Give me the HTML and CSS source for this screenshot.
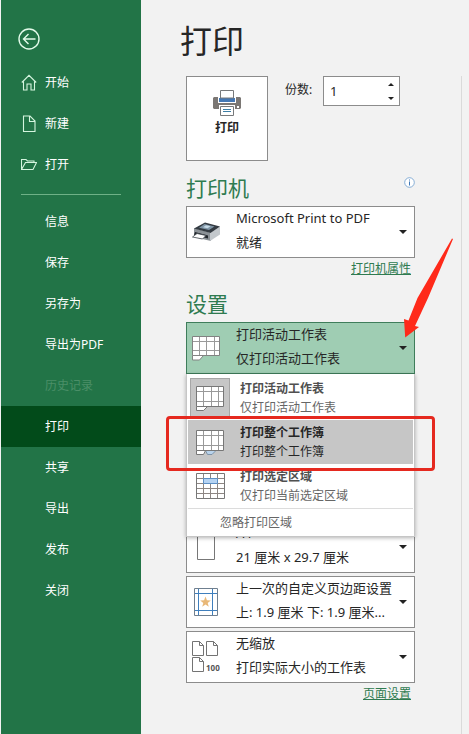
FILE: index.html
```html
<!DOCTYPE html>
<html lang="zh-CN">
<head>
<meta charset="UTF-8">
<meta name="viewport" content="width=device-width, initial-scale=1.0">
<title>打印</title>
<link rel="stylesheet" href="styles.css">
</head>
<body>
<!-- 左侧导航 -->
<nav class="sidebar">
    <button class="back-button" type="button">
        <svg width="22" height="22" viewBox="0 0 22 22"><circle cx="11" cy="11" r="10"/><path d="M17.500 11H5.500M10.500 6L5.500 11l5 5"/></svg>
    </button>
    <a class="nav-item" href="#">
        <svg class="nav-icon" width="16" height="17" viewBox="0 0 16 17"><path d="M.8 8.500L8 1.300l7.200 7.200M2.500 7.500v8.500h3.500v-6h4v6h3.500V7.500"/></svg>
        开始
    </a>
    <a class="nav-item" href="#">
        <svg class="nav-icon" width="16" height="17" viewBox="0 0 16 17"><path d="M2.500 1h6.500l5 5v10.500H2.500zM8.500 1v5.500H14"/></svg>
        新建
    </a>
    <a class="nav-item" href="#">
        <svg class="nav-icon" width="16" height="17" viewBox="0 0 16 17"><path d="M.5 13.500v-10H5l1.500 1.500h6.500v1.500M.5 13.500l4-7h11l-3.500 7z"/></svg>
        打开
    </a>
    <hr class="nav-divider">
    <a class="nav-item" href="#">信息</a>
    <a class="nav-item" href="#">保存</a>
    <a class="nav-item" href="#">另存为</a>
    <a class="nav-item" href="#">导出为PDF</a>
    <a class="nav-item disabled" aria-disabled="true">历史记录</a>
    <a class="nav-item active" href="#" aria-current="page">打印</a>
    <a class="nav-item" href="#">共享</a>
    <a class="nav-item" href="#">导出</a>
    <a class="nav-item" href="#">发布</a>
    <a class="nav-item" href="#">关闭</a>
</nav>

<!-- 打印设置 -->
<main class="settings">
    <h1 class="page-title">打印</h1>

    <div class="print-row">
        <button class="print-button" type="button">
            <svg width="28" height="26" viewBox="0 0 28 26">
                <path fill="#7b7774" d="M1 7h26l1 1v10l-1 1H1l-1-1V8z"/>
                <path fill="#fff" d="M5 6h18v7H5z"/>
                <path fill="#4478b5" d="M6 8h16v4H6z"/>
                <path fill="#fff" stroke="#77797b" d="M7.500.5h13V8h-13z"/>
                <path fill="#fff" d="M6 15h16v5H6z"/>
                <path fill="#fff" stroke="#77797b" d="M7.500 16.500h13v9h-13z"/>
                <path stroke="#3d7fa6" d="M10 19.500h8M10 21.500h8"/>
                <path fill="#fff" d="M24 16h2v2h-2z"/>
            </svg>
            打印
        </button>
        <label class="copies-label" for="copies">份数:</label>
        <div class="copies">
            <input class="copies-input" id="copies" type="number" value="1" min="1">
            <div class="spinner">
                <button class="spin spin-up" type="button"></button>
                <button class="spin spin-down" type="button"></button>
            </div>
        </div>
    </div>

    <div class="section-head">
        <h2 class="section-title">打印机</h2>
        <svg class="info" width="11" height="11" viewBox="0 0 11 11"><circle cx="5.500" cy="5.500" r="4.800" fill="#fff" stroke="#6b9ccd" stroke-width=".8"/><path stroke="#3e78b8" d="M5.500 4.500V8.500M5.500 2.500v1"/></svg>
    </div>
    <button class="combo" type="button" aria-haspopup="listbox">
        <span class="combo-icon">
            <svg width="28" height="20" viewBox="0 0 28 20">
                <path fill="#8b9196" d="M2 6l17 5v8L6 16l-4-4z"/>
                <path fill="#c3c8cc" d="M28 4.500v8L18 19v-8z"/>
                <path fill="#343b42" d="M13 .5l15 4L18.500 11 2 6.500z"/>
                <path fill="#7f95a6" d="M12.500 2l10 2.500-5.500 3.500-10-2.300z"/>
                <path fill="#c5d9e6" d="M14 3.200l4.500 1.100-3 2-4.500-1z"/>
                <path fill="#22272c" d="M3 10l13 3.500v3L2 13z"/>
                <path fill="#fff" stroke="#3c434a" stroke-width=".8" d="M5 11.500l9 2-3.500 3.500-10-2z"/>
            </svg>
        </span>
        <span class="combo-text"><span>Microsoft Print to PDF</span><span>就绪</span></span>
    </button>
    <a class="link" href="#">打印机属性</a>

    <div class="section-head">
        <h2 class="section-title">设置</h2>
    </div>
    <div class="options">
        <div class="print-what">
            <button class="combo open" type="button" aria-haspopup="listbox" aria-expanded="true">
                <span class="combo-icon">
                    <svg width="28" height="25" viewBox="0 0 28 25">
                        <path fill="#fff" stroke="#828282" d="M.5.5h27v19H.5zM.5 19.500v4.500H7.500l4-4.500"/>
                        <path stroke="#9a9a9a" d="M7.500 1v18M14.500 1v18M22.500 1v18M1 5.500h26M1 14.500h26"/>
                    </svg>
                </span>
                <span class="combo-text"><span>打印活动工作表</span><span>仅打印活动工作表</span></span>
            </button>
            <svg class="pointer" width="50" height="102" viewBox="0 0 50 102"><path fill="#ff2a1a" d="M48 2.500L49 3 24 62 11 90l4 1L1.200 101.500 0 83l4.500 1.500L13.500 62z"/></svg>
        </div>

        <div class="menu" role="listbox">
            <button class="menu-item selected" type="button" role="option" aria-selected="true">
                <span class="menu-icon">
                    <svg width="28" height="25" viewBox="0 0 28 25">
                        <path fill="#fff" stroke="#777" d="M.5.5h27v20H.5zM.5 20.500v4H7.500l4-4"/>
                        <path stroke="#999" d="M7.500 1v19M15.500 1v19M22.500 1v19M1 5.500h26M1 15.500h26"/>
                    </svg>
                </span>
                <span class="menu-text"><b>打印活动工作表</b><span>仅打印活动工作表</span></span>
            </button>
            <button class="menu-item hover" type="button" role="option">
                <span class="menu-icon">
                    <svg width="28" height="25" viewBox="0 0 28 25">
                        <path fill="#b9d3ec" stroke="#7d93a8" d="M9.500 20.500l2 4H16l4-4"/>
                        <path fill="#fff" stroke="#777" d="M.5.500h27v20H.5zM.5 20.500v4H7.500l2-4"/>
                        <path stroke="#999" d="M7.500 1v19M15.500 1v19M22.500 1v19M1 5.500h26M1 15.500h26"/>
                    </svg>
                </span>
                <span class="menu-text"><b>打印整个工作簿</b><span>打印整个工作簿</span></span>
            </button>
            <button class="menu-item" type="button" role="option">
                <span class="menu-icon">
                    <svg width="29" height="26" viewBox="0 0 29 26">
                        <path fill="#fff" stroke="#777" d="M.5.5h28v25H.5z"/>
                        <path stroke="#8d8683" d="M7.500 1v24M14.500 1v24M21.500 1v24M1 5.500h27M1 10.500h27M1 15.500h27M1 20.500h27"/>
                        <path fill="#b5d3f3" stroke="#5d8fc4" d="M7.500 5.500h14v5h-14z"/>
                    </svg>
                </span>
                <span class="menu-text"><b>打印选定区域</b><span>仅打印当前选定区域</span></span>
            </button>
            <button class="menu-footer" type="button">忽略打印区域</button>
        </div>

        <button class="combo paper" type="button" aria-haspopup="listbox">
            <span class="combo-icon">
                <svg width="18" height="26" viewBox="0 0 18 26"><path fill="#fff" stroke="#777" d="M.5.5h17v25H.5z"/></svg>
            </span>
            <span class="combo-text"><span>A4</span><span>21 厘米 x 29.7 厘米</span></span>
        </button>
        <button class="combo" type="button" aria-haspopup="listbox">
            <span class="combo-icon">
                <svg width="24" height="28" viewBox="0 0 24 28">
                    <path fill="#fff" stroke="#6f7f8f" d="M.5.5h23v27H.5z"/>
                    <path stroke="#3f7fbd" d="M4.500 1v26M18.500 1v26M1 5.500h22M1 22.500h22"/>
                    <path fill="#e9b877" d="M11.500 8.500l1.400 3.800 3.900.1-3.100 2.500 1.100 3.900-3.300-2.300-3.300 2.300 1.100-3.900-3.100-2.500 3.900-.1z"/>
                </svg>
            </span>
            <span class="combo-text"><span>上一次的自定义页边距设置</span><span>上: 1.9 厘米 下: 1.9 厘米...</span></span>
        </button>
        <button class="combo" type="button" aria-haspopup="listbox">
            <span class="combo-icon">
                <svg width="28" height="32" viewBox="0 0 28 32">
                    <path fill="#fff" stroke="#737373" d="M.5.5h7l4 4v10H.5zM7.500.5v4h4M14.500.5h7l4 4v10h-11zM21.500.5v4h4M.5 16.500h7l4 4v10H.5zM7.500 16.500v4h4"/>
                    <text class="scale-label" x="14" y="30">100</text>
                </svg>
            </span>
            <span class="combo-text"><span>无缩放</span><span>打印实际大小的工作表</span></span>
        </button>
    </div>
    <a class="link" href="#">页面设置</a>
</main>

<!-- 预览区 -->
<section class="preview"></section>
</body>
</html>
```

FILE: styles.css
```css
* {
    box-sizing: border-box;
}

body {
    margin: 0;
    padding-left: 1px;
    min-height: 100vh;
    display: flex;
    background-color: #f2f2f2;
    color: #262626;
    font-family: "Noto Sans", "Noto Sans CJK SC", sans-serif;
    font-size: 13px;
}

button,
input {
    font: inherit;
    color: inherit;
}

button {
    padding: 0;
    border: none;
    background: none;
    cursor: pointer;
}

svg {
    display: block;
    fill: none;
}

/* 左侧导航 */
.sidebar {
    flex: 0 0 140px;
    padding-top: 28px;
    background-color: #227447;
}

.back-button {
    display: block;
    margin: 0 0 12px 17px;
}

.back-button svg {
    stroke: #e3fbea;
    stroke-width: 1.4;
}

.nav-item {
    display: flex;
    align-items: center;
    height: 41px;
    padding: 0 0 2px 44px;
    color: #fff;
    font-size: 12px;
    text-decoration: none;
}

.nav-icon {
    margin: 2px 8px 0 -24px;
    stroke: #d5f5df;
    stroke-width: 1.1;
}

.nav-item.disabled {
    color: #4b8f68;
}

.nav-item.active {
    background-color: #024b1a;
}

.nav-divider {
    height: 1px;
    margin: 9px 20px 6px;
    border: none;
    background-color: #6fb187;
}

/* 设置栏 */
.settings {
    flex: 0 1 320px;
    padding: 19px 46px 30px 45px;
}

.page-title {
    margin: 0 0 13px -6px;
    font-size: 32px;
    font-weight: normal;
    line-height: 44px;
}

.print-row {
    display: flex;
    align-items: flex-start;
}

.print-button {
    display: flex;
    flex-direction: column;
    align-items: center;
    width: 82px;
    height: 85px;
    padding-top: 13px;
    border: 1px solid #8c8c8c;
    background-color: #fff;
    font-size: 12px;
    font-weight: bold;
    line-height: 24px;
}

.copies-label {
    margin-left: 17px;
    font-size: 12px;
    line-height: 28px;
}

.copies {
    display: flex;
    width: 77px;
    height: 30px;
    margin-left: auto;
    margin-right: 15px;
    border: 1px solid #8c8c8c;
    background-color: #fff;
}

.copies-input {
    flex: 1;
    min-width: 0;
    padding: 0 0 0 6px;
    border: none;
    outline: none;
    background: none;
    appearance: textfield;
    -moz-appearance: textfield;
}

.copies-input::-webkit-inner-spin-button {
    display: none;
}

.spinner {
    display: flex;
    flex-direction: column;
    width: 16px;
}

.spin {
    flex: 1;
    display: flex;
    align-items: center;
    justify-content: center;
}

.spin::before {
    content: '';
    border: 3px solid transparent;
}

.spin-up::before {
    border-top: none;
    border-bottom-color: #222;
}

.spin-down::before {
    border-bottom: none;
    border-top-color: #222;
}

.section-head {
    display: flex;
    justify-content: space-between;
    margin: 13px 0 4px;
}

.section-title {
    margin: 0;
    color: #2f7b50;
    font-size: 21px;
    font-weight: normal;
    line-height: 28px;
}

.info {
    margin-top: 3px;
}

/* 下拉框 */
.combo {
    display: flex;
    align-items: center;
    width: 100%;
    height: 52px;
    border: 1px solid #8c8c8c;
    background-color: #fff;
    text-align: left;
}

.combo::after {
    content: '';
    margin-right: 7px;
    border: 4px solid transparent;
    border-top-color: #222;
    border-bottom: none;
}

.combo.open {
    border-color: #3f7d5b;
    background-color: #9fcdb3;
}

.combo-icon {
    display: flex;
    justify-content: center;
    flex: 0 0 38px;
}

.combo-text {
    flex: 1;
    min-width: 0;
    padding: 0 0 4px 11px;
    line-height: 24px;
    white-space: nowrap;
}

.combo-text span,
.menu-text b,
.menu-text span {
    display: block;
}

.link {
    display: block;
    width: fit-content;
    margin: 3px 4px 0 auto;
    color: #2f7b50;
    font-size: 12px;
    line-height: 16px;
}

.options {
    display: flex;
    flex-direction: column;
    gap: 3px;
}

.print-what {
    position: relative;
}

/* 红色箭头 */
.pointer {
    position: absolute;
    right: -39px;
    bottom: 36px;
    z-index: 3;
}

/* 展开的菜单 */
.menu {
    position: relative;
    z-index: 2;
    margin-top: -3px;
    padding: 2px 1px 1px;
    border: 1px solid #c6c6c6;
    border-top: none;
    background-color: #fff;
    box-shadow: 0 1px 4px rgba(0, 0, 0, 0.3);
}

.menu-item {
    position: relative;
    display: flex;
    align-items: center;
    width: 100%;
    height: 44px;
    color: #666;
    font-size: 12px;
    line-height: 19px;
    text-align: left;
}

.menu-icon {
    display: flex;
    align-items: center;
    justify-content: center;
    width: 40px;
    height: 40px;
    margin: 0 10px 0 2px;
}

.menu-text b {
    color: #505050;
}

.menu-item.selected .menu-icon {
    border: 1px solid #a6a6a6;
    background-color: #c6c6c6;
}

.menu-item.hover,
.menu-item.hover b {
    background-color: #c6c6c6;
    color: #262626;
}

/* 红框标注 */
.menu-item.hover::after {
    content: '';
    position: absolute;
    inset: -4px -22px -7px -22px;
    z-index: 1;
    border: 3px solid #e5291f;
    border-radius: 4px;
}

.menu-footer {
    display: block;
    width: 100%;
    height: 27px;
    padding-left: 32px;
    border-top: 1px solid #dcdcdc;
    color: #666;
    font-size: 12px;
    text-align: left;
}

.paper {
    margin-top: -19px;
}

.scale-label {
    fill: #555;
    font-size: 8px;
    font-weight: bold;
}

/* 预览区 */
.preview {
    flex: 1;
    margin-top: 76px;
    border-left: 1px solid #dadada;
}
```
